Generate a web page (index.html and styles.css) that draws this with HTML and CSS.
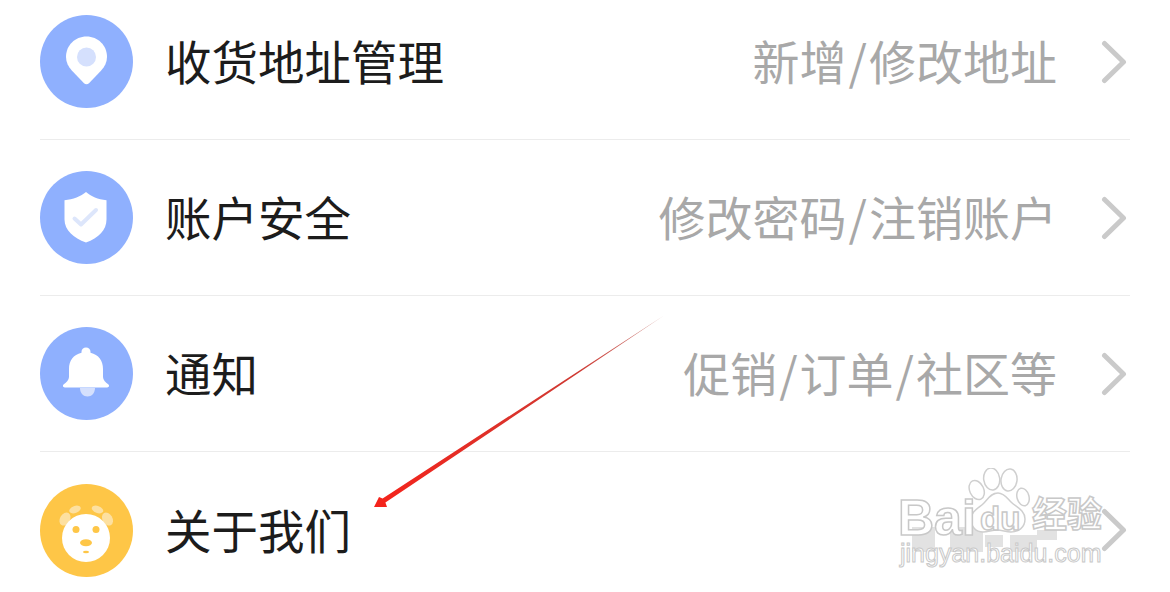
FILE: index.html
```html
<!DOCTYPE html>
<html lang="zh-CN">
<head>
  <meta charset="UTF-8">
  <meta name="viewport" content="width=device-width, initial-scale=1.0">
  <title>设置</title>
  <link rel="stylesheet" href="styles.css">
</head>
<body>
  <ul class="menu">
    <li class="menu-row">
      <svg class="menu-icon" viewBox="0 0 93 93">
        <circle cx="46.5" cy="46.5" r="46.5" fill="#8fb0fe"/>
        <path d="M46.5 21.5c11.5 0 20.500 9 20.500 20.300 0 5.500-2.300 10-5.800 13.700L49 68.200c-1.500 1.500-3.500 1.500-5 0L31.800 55.500C28.300 51.800 26 47.300 26 41.800c0-11.300 9-20.300 20.500-20.300z" fill="#fff"/>
        <circle cx="46.500" cy="42" r="9.500" fill="#d5e0fd"/>
      </svg>
      <span class="menu-title">收货地址管理</span>
      <span class="menu-hint">新增<span class="menu-slash">/</span>修改地址</span>
      <svg class="menu-chevron" viewBox="0 0 26 44"><path d="M3.500 3.500L22.500 22 3.500 40.500"/></svg>
    </li>
    <li class="menu-row">
      <svg class="menu-icon" viewBox="0 0 93 93">
        <circle cx="46.5" cy="46.5" r="46.5" fill="#8fb0fe"/>
        <path d="M46 21c5 4.500 12 7.300 20.500 8.300v19.200c0 10.500-8 18.500-20.500 23-12.500-4.500-21.500-12.500-21.500-23V29.300C33 28.300 41 25.500 46 21z" fill="#fff"/>
        <path d="M34.500 47.500l6.500 6 15-14.500" fill="none" stroke="#dde6fb" stroke-width="4" stroke-linecap="round" stroke-linejoin="round"/>
      </svg>
      <span class="menu-title">账户安全</span>
      <span class="menu-hint">修改密码<span class="menu-slash">/</span>注销账户</span>
      <svg class="menu-chevron" viewBox="0 0 26 44"><path d="M3.500 3.500L22.500 22 3.500 40.500"/></svg>
    </li>
    <li class="menu-row">
      <svg class="menu-icon" viewBox="0 0 93 93">
        <circle cx="46.5" cy="46.5" r="46.5" fill="#8fb0fe"/>
        <path d="M40 61h15c0 5-3.400 8.500-7.500 8.500S40 66 40 61z" fill="#d5e0fd"/>
        <path d="M46 20.500c2.600 0 4.500 1.900 4.500 4.300v.9C58.700 27.500 63 33.800 63 42v8c0 2.800 2.500 5.300 5.200 7.300 1.500 1.200.9 3.200-1 3.200H24.800c-1.900 0-2.500-2-1-3.200 2.700-2 5.200-4.500 5.200-7.300v-8c0-8.200 4.300-14.500 12.500-16.300v-.9c0-2.400 1.900-4.300 4.500-4.300z" fill="#fff"/>
      </svg>
      <span class="menu-title">通知</span>
      <span class="menu-hint">促销<span class="menu-slash">/</span>订单<span class="menu-slash">/</span>社区等</span>
      <svg class="menu-chevron" viewBox="0 0 26 44"><path d="M3.500 3.500L22.500 22 3.500 40.500"/></svg>
    </li>
    <li class="menu-row">
      <svg class="menu-icon" viewBox="0 0 93 93">
        <circle cx="46.5" cy="46.5" r="46.5" fill="#fec647"/>
        <ellipse cx="25" cy="35" rx="5" ry="7" transform="rotate(30 25 35)" fill="#fde0a0"/>
        <ellipse cx="35" cy="25.500" rx="6" ry="3.500" transform="rotate(-20 35 25.500)" fill="#fde0a0"/>
        <ellipse cx="57.500" cy="25.500" rx="6" ry="3.500" transform="rotate(20 57.500 25.500)" fill="#fde0a0"/>
        <ellipse cx="67.500" cy="35" rx="5" ry="7" transform="rotate(-30 67.500 35)" fill="#fde0a0"/>
        <circle cx="46" cy="54" r="24" fill="#fff"/>
        <circle cx="36" cy="45.500" r="3.500" fill="#fec647"/>
        <circle cx="56" cy="45.500" r="3.500" fill="#fec647"/>
        <ellipse cx="46" cy="58.800" rx="6" ry="3.500" fill="#fec647"/>
        <ellipse cx="46" cy="68" rx="3" ry="1.200" fill="#fec647"/>
      </svg>
      <span class="menu-title">关于我们</span>
      <svg class="menu-chevron menu-chevron-end" viewBox="0 0 26 44"><path d="M3.500 3.500L22.500 22 3.500 40.500"/></svg>
    </li>
  </ul>

  <!-- 红色箭头 -->
  <svg class="arrow" viewBox="0 0 1170 592">
    <defs>
      <linearGradient id="arrow-fade" gradientUnits="userSpaceOnUse" x1="374" y1="507" x2="663" y2="316">
        <stop offset="0" stop-color="#f5231b"/>
        <stop offset="0.7" stop-color="#cf3a33"/>
        <stop offset="1" stop-color="#c98580"/>
      </linearGradient>
    </defs>
    <path d="M664 315.500L382.600 498.400 379 497 374 507 387 507 385.400 502.600z" fill="url(#arrow-fade)"/>
  </svg>

  <!-- 水印 -->
  <div class="watermark">
    <span class="wm-block wm-block-a"></span>
    <span class="wm-block wm-block-b"></span>
    <span class="wm-block wm-block-c"></span>
    <span class="wm-block wm-block-d"></span>
    <span class="wm-block wm-block-e"></span>
    <svg class="wm-paw" viewBox="0 0 62 65">
      <ellipse cx="8.700" cy="22" rx="7" ry="10" transform="rotate(-25 8.700 22)"/>
      <ellipse cx="23.700" cy="11" rx="8" ry="11" transform="rotate(-8 23.700 11)"/>
      <ellipse cx="41" cy="12" rx="8" ry="11" transform="rotate(8 41 12)"/>
      <ellipse cx="55" cy="29" rx="6" ry="9" transform="rotate(-15 55 29)"/>
      <path d="M30 25c6 0 9 5 13 9 5 5 14 8 14 17 0 9-7 13-14 13-5 0-9-2-14-2s-9 2-14 2C8 64 3 59 3 51c0-8 8-11 13-16 4-4 7-10 14-10z"/>
    </svg>
    <span class="wm-text wm-bai">Bai</span>
    <span class="wm-text wm-du">du</span>
    <span class="wm-text wm-cn">经验</span>
    <span class="wm-text wm-url">jingyan.baidu.com</span>
  </div>
</body>
</html>
```

FILE: styles.css
```css
* {
  box-sizing: border-box;
}

body {
  position: relative;
  margin: 0;
  height: 592px;
  overflow: hidden;
  background-color: #fff;
  font-family: "Noto Sans CJK SC", "Noto Sans", sans-serif;
}

.menu {
  list-style: none;
  margin: -16px 40px 0;
  padding: 0;
}

.menu-row {
  display: flex;
  align-items: center;
  height: 156px;
  border-bottom: 1px solid #ececec;
}

.menu-row:last-child {
  border-bottom: none;
}

.menu-icon {
  flex: none;
  width: 93px;
  height: 93px;
}

.menu-title {
  margin-left: 32px;
  padding-bottom: 4px;
  font-size: 46.500px;
  color: #1c1c1c;
}

.menu-hint {
  margin-left: auto;
  padding-bottom: 4px;
  font-size: 47px;
  color: #a8a8a8;
}

.menu-slash {
  padding: 0 2px;
}

.menu-chevron {
  flex: none;
  width: 26px;
  height: 44px;
  margin-left: 44px;
  margin-right: 3px;
  fill: none;
  stroke: #cacaca;
  stroke-width: 5;
  stroke-linecap: round;
  stroke-linejoin: round;
}

.menu-chevron-end {
  margin-left: auto;
}

.arrow {
  position: absolute;
  left: 0;
  top: 0;
  width: 1170px;
  height: 592px;
}

.watermark {
  position: absolute;
  left: 890px;
  top: 460px;
  width: 230px;
  height: 120px;
}

.wm-block {
  position: absolute;
  background-color: #e2e2e2;
}

.wm-block-a {
  left: 22px;
  top: 67px;
  width: 23px;
  height: 25px;
}

.wm-block-b {
  left: 60px;
  top: 67px;
  width: 33px;
  height: 25px;
}

.wm-block-c {
  left: 95px;
  top: 75px;
  width: 18px;
  height: 12px;
}

.wm-block-d {
  left: 120px;
  top: 75px;
  width: 27px;
  height: 17px;
}

.wm-block-e {
  left: 147px;
  top: 70px;
  width: 20px;
  height: 10px;
}

.wm-paw {
  position: absolute;
  left: 78px;
  top: 8px;
  width: 62px;
  height: 65px;
  fill: #fff;
  stroke: #cfcfcf;
  stroke-width: 1.500;
}

.wm-text {
  position: absolute;
  font-family: "Liberation Sans", "Noto Sans CJK SC", sans-serif;
  color: #fff;
  -webkit-text-stroke: 1.500px #c8c8c8;
  line-height: 1;
}

.wm-bai {
  left: 8px;
  top: 36px;
  font-size: 50px;
  font-weight: bold;
  line-height: 0.9;
}

.wm-du {
  left: 90px;
  top: 42px;
  font-size: 33px;
  font-weight: bold;
}

.wm-cn {
  left: 142px;
  top: 37px;
  font-size: 35px;
  font-weight: bold;
}

.wm-url {
  left: 10px;
  top: 82px;
  font-size: 25px;
  line-height: 0.88;
  -webkit-text-stroke-width: 1px;
}
```
